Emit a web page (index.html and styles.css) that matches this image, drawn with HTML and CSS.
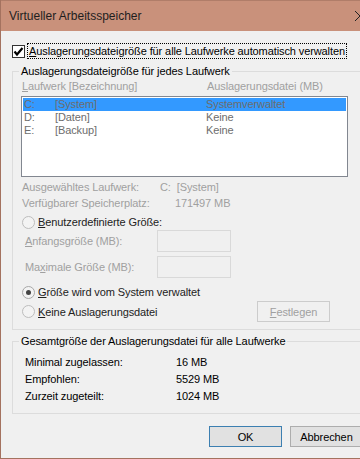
FILE: index.html
```html
<!DOCTYPE html>
<html lang="de">
<head>
    <meta name="viewport" content="width=device-width, initial-scale=1.0">
    <title>Virtueller Arbeitsspeicher</title>
    <link rel="stylesheet" href="styles.css">
</head>
<body>

    <div class="window">

        <!-- Title bar -->
        <div class="titlebar">
            <span class="title">Virtueller Arbeitsspeicher</span>
            <svg class="close" width="12" height="12" viewBox="0 0 12 12">
                <path d="M1 1 L11 11 M11 1 L1 11" stroke="#222" stroke-width="1" fill="none"/>
            </svg>
        </div>

        <div class="content">

            <!-- Auto manage -->
            <label class="autocheck">
                <span class="checkbox">
                    <svg width="11" height="11" viewBox="0 0 11 11">
                        <path d="M1.5 5.5 L4 8.5 L9.5 2" stroke="#000" stroke-width="2.2" fill="none"/>
                    </svg>
                </span>
                <span class="focus"><u>A</u>uslagerungsdateigröße für alle Laufwerke automatisch verwalten</span>
            </label>

            <!-- Per drive -->
            <fieldset class="group drives">
                <legend>Auslagerungsdateigröße für jedes Laufwerk</legend>

                <div class="cols disabled">
                    <span><u>L</u>aufwerk [Bezeichnung]</span>
                    <span>Auslagerungsdatei (MB)</span>
                </div>

                <div class="listbox">
                    <div class="row selected"><span>C:</span><span>[System]</span><span>Systemverwaltet</span></div>
                    <div class="row"><span>D:</span><span>[Daten]</span><span>Keine</span></div>
                    <div class="row"><span>E:</span><span>[Backup]</span><span>Keine</span></div>
                </div>

                <div class="info disabled first">
                    <span class="info-label">Ausgewähltes Laufwerk:</span>
                    <span>C:&nbsp;&nbsp;[System]</span>
                </div>
                <div class="info disabled">
                    <span class="info-label">Verfügbarer Speicherplatz:</span>
                    <span class="indent">171497 MB</span>
                </div>

                <div class="radio-row custom">
                    <span class="radio"></span>
                    <span><u>B</u>enutzerdefinierte Größe:</span>
                </div>

                <div class="size-row first">
                    <span class="size-label disabled"><u>A</u>nfangsgröße (MB):</span>
                    <span class="textbox"></span>
                </div>
                <div class="size-row">
                    <span class="size-label disabled">Ma<u>x</u>imale Größe (MB):</span>
                    <span class="textbox"></span>
                </div>

                <div class="radio-row system">
                    <span class="radio checked"></span>
                    <span><u>G</u>röße wird vom System verwaltet</span>
                </div>

                <div class="last-row">
                    <div class="radio-row">
                        <span class="radio"></span>
                        <span><u>K</u>eine Auslagerungsdatei</span>
                    </div>
                    <button class="btn disabled-btn"><u>F</u>estlegen</button>
                </div>
            </fieldset>

            <!-- Totals -->
            <fieldset class="group totals">
                <legend>Gesamtgröße der Auslagerungsdatei für alle Laufwerke</legend>
                <div class="total"><span class="total-label">Minimal zugelassen:</span><span>16 MB</span></div>
                <div class="total"><span class="total-label">Empfohlen:</span><span>5529 MB</span></div>
                <div class="total"><span class="total-label">Zurzeit zugeteilt:</span><span>1024 MB</span></div>
            </fieldset>

            <!-- Buttons -->
            <div class="buttons">
                <button class="btn default">OK</button>
                <button class="btn">Abbrechen</button>
            </div>

        </div>
    </div>

</body>
</html>
```

FILE: styles.css
```css
/* General */
body {
    margin: 0;
    overflow: hidden;
    font-family: 'Liberation Sans', Arial, sans-serif;
    font-size: 11px;
    letter-spacing: -0.1px;
    color: #000;
    background: #f0f0f0;
}

u {
    text-decoration: underline;
    text-underline-offset: 1px;
}

.disabled {
    color: #a0a0a0;
}

/* Window frame */
.window {
    box-sizing: border-box;
    width: 375px;
    height: 459px;
    border-left: 1px solid #a4725f;
    border-bottom: 1px solid #a4725f;
    background: #f0f0f0;
}

.titlebar {
    box-sizing: border-box;
    height: 31px;
    border-top: 1px solid #b07d69;
    background: #c9917b;
    display: flex;
    align-items: center;
    justify-content: space-between;
    padding: 0 9px 1px 8px;
}

.title {
    font-size: 12px;
    letter-spacing: 0;
    color: #1e1e1e;
}

.content {
    padding: 12px 12px 0 11px;
}

/* Checkbox */
.autocheck {
    display: flex;
    align-items: center;
    height: 16px;
}

.checkbox {
    box-sizing: border-box;
    width: 13px;
    height: 13px;
    border: 1px solid #333;
    background: #fff;
    display: flex;
    align-items: center;
    justify-content: center;
    margin-right: 2px;
}

.focus {
    border: 1px dotted #000;
    padding: 0 1px 0 1px;
    line-height: 14px;
}

/* Group boxes */
.group {
    margin: 5px 0 0 0;
    padding: 1px 0 7px 9px;
    border: 1px solid #dcdcdc;
    min-width: 0;
}

.group legend {
    margin-left: -3px;
    padding: 0 2px;
    line-height: 14px;
}

.cols {
    display: grid;
    grid-template-columns: 185px 1fr;
    height: 14px;
    line-height: 14px;
}

.listbox {
    box-sizing: border-box;
    margin: 3px 0 0 -1px;
    width: 327px;
    height: 81px;
    border: 1px solid #828790;
    background: #fff;
    padding: 1px;
}

.row {
    display: grid;
    grid-template-columns: 31px 151px 1fr;
    height: 13px;
    line-height: 13px;
    padding-left: 1px;
    color: #6d6d6d;
}

.row.selected {
    background: #3399ff;
    color: #6d6d6d;
}

.info {
    display: flex;
    height: 15px;
    line-height: 15px;
    margin-top: 1px;
}

.info.first {
    margin-top: 3px;
}

.info-label {
    width: 138px;
}

.indent {
    padding-left: 15px;
}

/* Radios */
.radio-row {
    display: flex;
    align-items: center;
    height: 14px;
    color: #222;
}

.radio-row.custom {
    margin-top: 4px;
}

.radio-row.system {
    margin-top: 7px;
}

.radio {
    box-sizing: border-box;
    width: 13px;
    height: 13px;
    border-radius: 50%;
    border: 1px solid #bdbdbd;
    background: #f3f3f3;
    margin-right: 3px;
    display: flex;
    align-items: center;
    justify-content: center;
}

.radio.checked {
    border-color: #a8a8a8;
}

.radio.checked::after {
    content: "";
    width: 5px;
    height: 5px;
    border-radius: 50%;
    background: #444;
}

/* Size inputs */
.size-row {
    display: flex;
    align-items: center;
    height: 22px;
    margin-top: 4px;
}

.size-row.first {
    margin-top: 1px;
}

.size-label {
    width: 132px;
    padding-left: 3px;
}

.textbox {
    box-sizing: border-box;
    width: 74px;
    height: 22px;
    border: 1px solid #d9d9d9;
    background: #f0f0f0;
}

.last-row {
    display: flex;
    align-items: center;
    justify-content: space-between;
    height: 21px;
    margin-top: 2px;
    padding-right: 32px;
}

/* Buttons */
.btn {
    box-sizing: border-box;
    width: 73px;
    height: 21px;
    font-family: inherit;
    font-size: 11px;
    letter-spacing: -0.1px;
    color: #000;
    background: #e1e1e1;
    border: 1px solid #adadad;
    padding: 0;
}

.btn.default {
    border-color: #3c7fb1;
}

.disabled-btn {
    background: #f0f0f0;
    border-color: #cccccc;
    color: #a0a0a0;
}

/* Totals */
.group.totals {
    margin-top: 4px;
    padding: 6px 0 8px 9px;
}

.total {
    display: flex;
    height: 17px;
    line-height: 17px;
    padding-left: 3px;
}

.total-label {
    width: 151px;
}

.buttons {
    display: flex;
    justify-content: flex-end;
    gap: 8px;
    margin-top: 12px;
}
```
